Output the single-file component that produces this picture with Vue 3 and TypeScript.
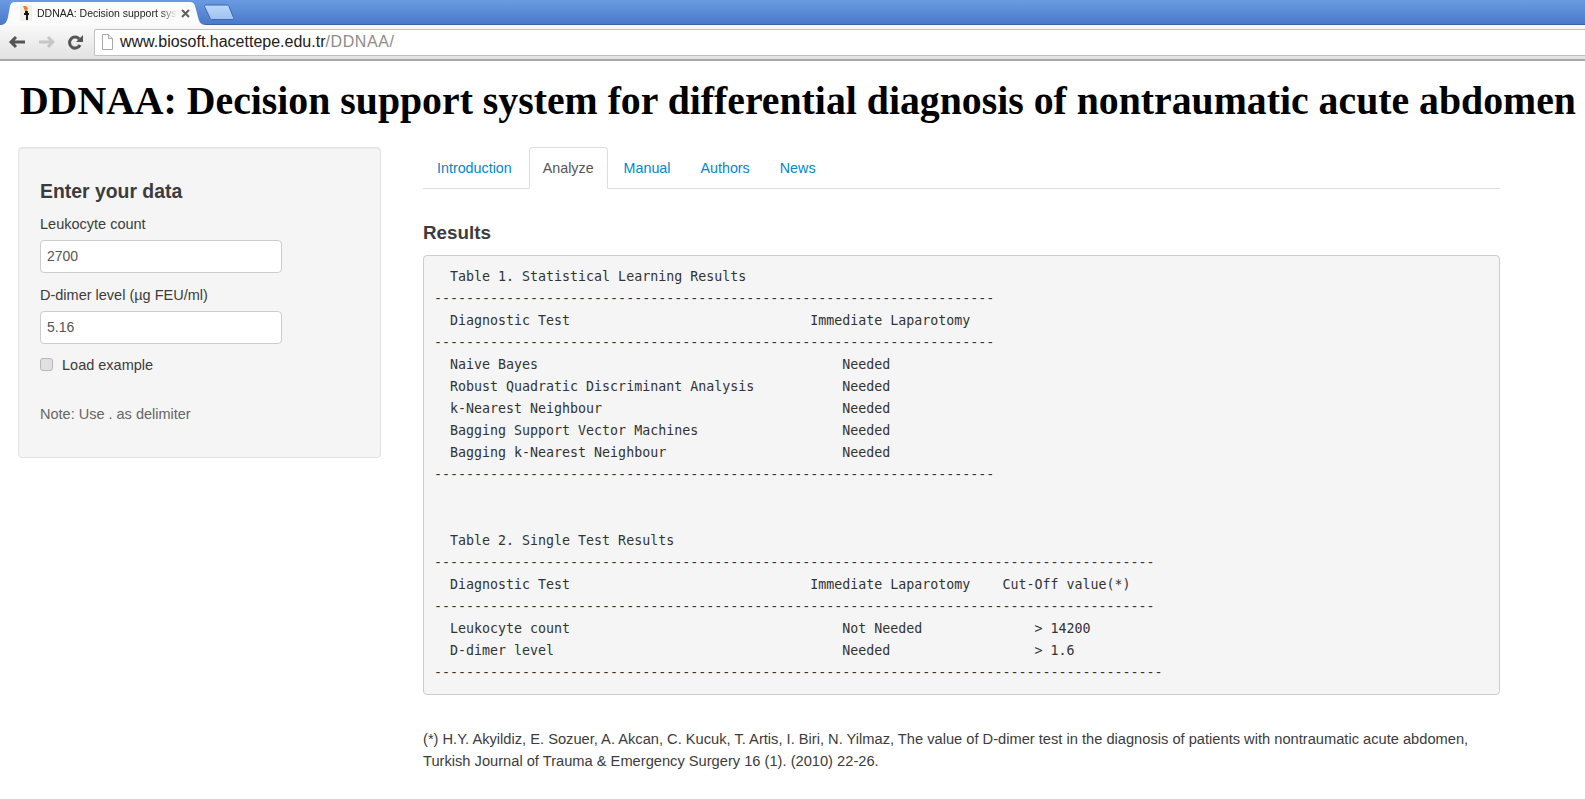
<template>
  <div class="window">
    <div class="tabstrip">
      <div class="browser-tab">
        <svg class="tab-shape" width="206" height="25" viewBox="0 0 206 25">
          <path d="M0 25c5 0 7-3 8-8l2-11c1-3 2-4 5-4h175c3 0 4 1 5 4l3 11c1 5 3 8 8 8z" fill="#fbfbfb" />
        </svg>
        <svg class="favicon" width="12" height="16" viewBox="0 0 12 16">
          <rect width="12" height="16" fill="#f0f0ee" />
          <path d="M3 1h3l2 2-1 3H5z" fill="#e8832a" />
          <path d="M5 6h3v2h1v2H8v5H6v-5H4V8h1z" fill="#181818" />
        </svg>
        <span class="browser-tab-title">DDNAA: Decision support sys</span>
        <svg class="tab-close" width="9" height="9" viewBox="0 0 9 9">
          <path d="M1 1l7 7M8 1L1 8" stroke="#5f5f5f" stroke-width="2" />
        </svg>
      </div>
      <svg class="new-tab" width="33" height="17" viewBox="0 0 33 17">
        <defs>
          <linearGradient id="newTabFill" x1="0" y1="0" x2="0" y2="1">
            <stop offset="0" stop-color="#bcd8fa" />
            <stop offset="1" stop-color="#9dc1f2" />
          </linearGradient>
        </defs>
        <path d="M1.500 2.500c0-1 .5-1.500 1.500-1.500h21c1 0 1.500.5 2 1.500l4.500 11c.5 1 0 2-1 2H9c-1 0-1.500-.5-2-1.500z" fill="url(#newTabFill)" stroke="#3f68ad" />
      </svg>
    </div>
    <div class="toolbar">
      <svg class="nav-icon" width="18" height="18" viewBox="0 0 18 18">
        <path d="M17 9H4M8 4L3 9l5 5" fill="none" stroke="#555" stroke-width="3" />
      </svg>
      <svg class="nav-icon" width="18" height="18" viewBox="0 0 18 18">
        <path d="M2 9h13M11 4l5 5-5 5" fill="none" stroke="#c6c6c6" stroke-width="3" />
      </svg>
      <svg class="nav-icon" width="18" height="18" viewBox="0 0 18 18">
        <path d="M14 12a5.500 5.500 0 1 1-.8-6" fill="none" stroke="#555" stroke-width="3" />
        <path d="M17 2v7h-7z" fill="#555" />
      </svg>
      <div class="omnibox">
        <svg class="page-icon" width="11" height="16" viewBox="0 0 11 16">
          <path d="M.5.500h6l4 4v11H.5z" fill="#fff" stroke="#a8a8a8" />
          <path d="M6.500.500v4h4" fill="#eee" stroke="#a8a8a8" />
        </svg>
        <span class="url-host">www.biosoft.hacettepe.edu.tr</span><span class="url-path">/DDNAA/</span>
      </div>
    </div>

    <h1 class="page-title">DDNAA: Decision support system for differential diagnosis of nontraumatic acute abdomen</h1>

    <div class="layout">
      <aside class="well sidebar">
        <h3>Enter your data</h3>
        <label for="leuko">Leukocyte count</label>
        <input id="leuko" class="field" type="text" value="2700" />
        <label for="ddimer">D-dimer level (µg FEU/ml)</label>
        <input id="ddimer" class="field" type="text" value="5.16" />
        <label class="check">
          <input type="checkbox" />
          <span>Load example</span>
        </label>
        <p class="note">Note: Use . as delimiter</p>
      </aside>

      <main class="content">
        <ul class="tabs">
          <li v-for="t in tabs" :key="t" :class="{ active: t === 'Analyze' }"><a href="#">{{ t }}</a></li>
        </ul>
        <h4>Results</h4>
        <pre class="output">{{ output }}</pre>
        <p class="reference">(*) H.Y. Akyildiz, E. Sozuer, A. Akcan, C. Kucuk, T. Artis, I. Biri, N. Yilmaz, The value of D-dimer test in the diagnosis of patients with nontraumatic acute abdomen, Turkish Journal of Trauma &amp; Emergency Surgery 16 (1). (2010) 22-26.</p>
      </main>
    </div>
  </div>
</template>

<script setup lang="ts">
const tabs: string[] = ['Introduction', 'Analyze', 'Manual', 'Authors', 'News']

const dash = (n: number): string => '-'.repeat(n)

const output: string = [
  '  Table 1. Statistical Learning Results',
  dash(70),
  '  Diagnostic Test                              Immediate Laparotomy',
  dash(70),
  '  Naive Bayes                                      Needed',
  '  Robust Quadratic Discriminant Analysis           Needed',
  '  k-Nearest Neighbour                              Needed',
  '  Bagging Support Vector Machines                  Needed',
  '  Bagging k-Nearest Neighbour                      Needed',
  dash(70),
  '',
  '',
  '  Table 2. Single Test Results',
  dash(90),
  '  Diagnostic Test                              Immediate Laparotomy    Cut-Off value(*)',
  dash(90),
  '  Leukocyte count                                  Not Needed              > 14200',
  '  D-dimer level                                    Needed                  > 1.6',
  dash(91),
].join('\n')
</script>

<style>
html,
body {
  background: #fff;
  overflow: hidden;
}
</style>

<style scoped>
.window {
  width: 1585px;
  height: 799px;
  overflow: hidden;
  font-family: "Liberation Sans", Arial, sans-serif;
  font-size: 14.5px;
  color: #3c3c3c;
}

/* browser chrome */
.tabstrip {
  height: 25px;
  display: flex;
  align-items: flex-end;
  box-sizing: border-box;
  background: linear-gradient(#6a9be2, #4a7ac8);
  border-bottom: 1px solid #3a62a8;
}
.browser-tab {
  position: relative;
  flex: none;
  width: 206px;
  height: 25px;
  margin-bottom: -1px;
  display: flex;
  align-items: center;
  padding: 1px 0 0 20px;
  box-sizing: border-box;
}
.tab-shape {
  position: absolute;
  left: 0;
  top: 0;
}
.favicon {
  position: relative;
  flex: none;
  margin-right: 5px;
}
.browser-tab-title {
  position: relative;
  flex: none;
  width: 140px;
  white-space: nowrap;
  font-size: 10.5px;
  line-height: 14px;
  color: #222;
  -webkit-mask-image: linear-gradient(90deg, #000 88%, transparent);
  mask-image: linear-gradient(90deg, #000 88%, transparent);
}
.tab-close {
  position: relative;
  flex: none;
  margin-left: 4px;
}
.new-tab {
  flex: none;
  margin: 0 0 3px -3px;
}
.toolbar {
  height: 36px;
  display: flex;
  align-items: center;
  padding-left: 8px;
  box-sizing: border-box;
  background: linear-gradient(#f9f9f9, #e2e2e2);
  border-bottom: 2px solid #a9a9a9;
}
.nav-icon {
  flex: none;
  margin-right: 11px;
}
.omnibox {
  flex: 1;
  height: 27px;
  margin-left: -1px;
  display: flex;
  align-items: center;
  padding-left: 7px;
  box-sizing: border-box;
  background: #fff;
  border: 1px solid #c0c0c0;
  border-right: none;
  border-radius: 2px 0 0 2px;
  font-size: 16px;
  color: #222;
}
.page-icon {
  flex: none;
  margin-right: 7px;
}
.url-path {
  color: #8c8c8c;
  letter-spacing: 0.6px;
}

/* page */
.page-title {
  margin: 18px 0 0;
  padding-left: 20px;
  font-family: "Liberation Serif", "Times New Roman", serif;
  font-size: 39.77px;
  line-height: 44px;
  font-weight: 700;
  color: #000;
  white-space: nowrap;
}
.layout {
  display: flex;
  align-items: flex-start;
  margin-top: 24px;
  padding-left: 18px;
}
.well {
  box-sizing: border-box;
  background: #f5f5f5;
  border: 1px solid #e3e3e3;
  border-radius: 4px;
  box-shadow: inset 0 1px 1px rgba(0, 0, 0, 0.05);
}
.sidebar {
  flex: none;
  width: 363px;
  height: 311px;
  padding: 19px 21px;
}
.sidebar h3 {
  margin: 14px 0 13px;
  font-size: 19.4px;
  line-height: 20px;
  font-weight: 700;
}
.sidebar label {
  display: block;
  line-height: 20px;
  margin-bottom: 6px;
}
.field {
  display: block;
  box-sizing: border-box;
  width: 242px;
  height: 33px;
  margin-bottom: 12px;
  padding: 5px 6px 7px;
  border: 1px solid #ccc;
  border-radius: 4px;
  background: #fff;
  font: 14px "Liberation Sans", Arial, sans-serif;
  color: #555;
}
.sidebar .check {
  display: flex;
  align-items: center;
  margin: -1px 0 0;
}
.check input {
  appearance: none;
  flex: none;
  box-sizing: border-box;
  width: 13px;
  height: 13px;
  margin: -1px 9px 0 0;
  background: #e0e0e0;
  border: 1px solid #b8b8b8;
  border-radius: 3px;
}
.note {
  margin: 29px 0 0;
  line-height: 20px;
  color: #666;
}
.content {
  flex: none;
  width: 1077px;
  margin-left: 42px;
}
.tabs {
  display: flex;
  list-style: none;
  margin: 0;
  padding: 0;
  height: 41px;
  border-bottom: 1px solid #ddd;
}
.tabs li {
  height: 42px;
  box-sizing: border-box;
  margin-right: 2px;
  padding: 10px 13px;
  font-size: 14.3px;
  line-height: 20px;
  border: 1px solid transparent;
  border-radius: 4px 4px 0 0;
}
.tabs li:first-child {
  padding-right: 14px;
}
.tabs a {
  color: #0088cc;
  text-decoration: none;
}
.tabs li.active {
  background: #fff;
  border-color: #ddd #ddd #fff;
}
.tabs li.active a {
  color: #555;
}
h4 {
  margin: 34px 0 12px;
  font-size: 18.8px;
  line-height: 20px;
  font-weight: 700;
}
.output {
  box-sizing: border-box;
  height: 440px;
  margin: 0;
  padding: 9.5px 10px;
  background: #f5f5f5;
  border: 1px solid #ccc;
  border-radius: 4px;
  font-family: "DejaVu Sans Mono", "Liberation Mono", monospace;
  font-size: 13.3px;
  line-height: 22px;
  color: #333;
}
.reference {
  margin: 33px 0 0;
  font-size: 14.66px;
  line-height: 22px;
}
</style>
